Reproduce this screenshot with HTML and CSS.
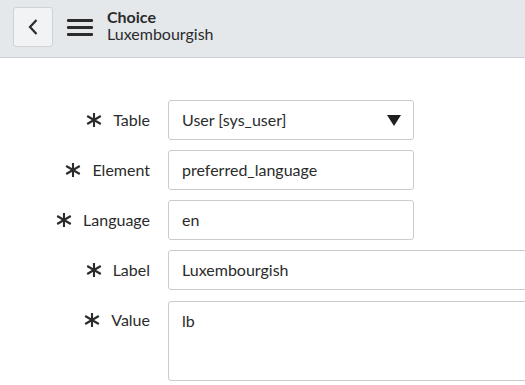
FILE: index.html
```html
<!DOCTYPE html>
<html lang="en">
<head>
<meta charset="utf-8">
<title>Choice - Luxembourgish</title>
<link rel="stylesheet" href="styles.css">
</head>
<body>
<header class="topbar">
  <button class="back-btn" aria-label="Back">
    <svg width="12" height="18" viewBox="0 0 12 18"><path d="M9.5 2 L3 9 L9.5 16" fill="none" stroke="#2b2b2b" stroke-width="2.2"/></svg>
  </button>
  <div class="hamburger" aria-label="Menu"><span></span><span></span><span></span></div>
  <div class="title">
    <div class="title-main">Choice</div>
    <div class="title-sub">Luxembourgish</div>
  </div>
</header>
<main class="form">
  <div class="label"><svg class="req" viewBox="0 0 16 14"><path d="M8 0 V14 M1.2 3 L14.8 11 M1.2 11 L14.8 3" stroke="#2b2b2b" stroke-width="2.1" fill="none"/></svg><span>Table</span></div>
  <div class="field select short"><span>User [sys_user]</span><svg class="caret" width="14" height="11" viewBox="0 0 14 11"><path d="M0 0 H14 L7 11 Z" fill="#1f1f1f"/></svg></div>

  <div class="label"><svg class="req" viewBox="0 0 16 14"><path d="M8 0 V14 M1.2 3 L14.8 11 M1.2 11 L14.8 3" stroke="#2b2b2b" stroke-width="2.1" fill="none"/></svg><span>Element</span></div>
  <div class="field short"><span>preferred_language</span></div>

  <div class="label"><svg class="req" viewBox="0 0 16 14"><path d="M8 0 V14 M1.2 3 L14.8 11 M1.2 11 L14.8 3" stroke="#2b2b2b" stroke-width="2.1" fill="none"/></svg><span>Language</span></div>
  <div class="field short"><span>en</span></div>

  <div class="label"><svg class="req" viewBox="0 0 16 14"><path d="M8 0 V14 M1.2 3 L14.8 11 M1.2 11 L14.8 3" stroke="#2b2b2b" stroke-width="2.1" fill="none"/></svg><span>Label</span></div>
  <div class="field long"><span>Luxembourgish</span></div>

  <div class="label"><svg class="req" viewBox="0 0 16 14"><path d="M8 0 V14 M1.2 3 L14.8 11 M1.2 11 L14.8 3" stroke="#2b2b2b" stroke-width="2.1" fill="none"/></svg><span>Value</span></div>
  <div class="field long area"><span>lb</span></div>
</main>
</body>
</html>
```
FILE: styles.css
```css
html, body {
  margin: 0;
  padding: 0;
  background: #ffffff;
  overflow: hidden;
}
body {
  font-family: "Lato", "Liberation Sans", sans-serif;
  font-size: 16px;
  color: #2b2b2b;
  width: 525px;
  height: 385px;
}
.topbar {
  display: flex;
  align-items: flex-start;
  height: 50px;
  padding: 7px 13px 0 13px;
  background: #e5e8eb;
  border-bottom: 1px solid #cdd1d5;
}
.back-btn {
  width: 40px;
  height: 40px;
  box-sizing: border-box;
  border: 1px solid #cfd3d7;
  border-radius: 3px;
  background: #f1f3f5;
  display: flex;
  align-items: center;
  justify-content: center;
  padding: 0;
  margin: 0;
}
.hamburger {
  display: flex;
  flex-direction: column;
  gap: 4px;
  width: 26px;
  margin: 12px 0 0 14px;
}
.hamburger span {
  display: block;
  height: 3px;
  background: #2b2b2b;
  border-radius: 1px;
}
.title {
  margin: 1px 0 0 14px;
  line-height: 17px;
}
.title-main {
  font-weight: 700;
}
.form {
  display: grid;
  grid-template-columns: 150px 400px;
  column-gap: 18px;
  row-gap: 10px;
  padding-top: 42px;
}
.label {
  display: flex;
  justify-content: flex-end;
  align-items: center;
  box-sizing: border-box;
  height: 40px;
  padding-bottom: 2px;
  gap: 11px;
}
.req {
  width: 16px;
  height: 14px;
  margin-top: 1px;
}
.field {
  box-sizing: border-box;
  height: 40px;
  border: 1px solid #cbcbcb;
  border-radius: 3px;
  padding: 0 12px 2px 13px;
  display: flex;
  align-items: center;
  justify-content: space-between;
  background: #fff;
}
.caret {
  margin-top: 2px;
}
.short { width: 246px; }
.long { width: 400px; }
.area {
  height: 80px;
  align-items: flex-start;
  padding-top: 9px;
  margin-top: 1px;
}
```
